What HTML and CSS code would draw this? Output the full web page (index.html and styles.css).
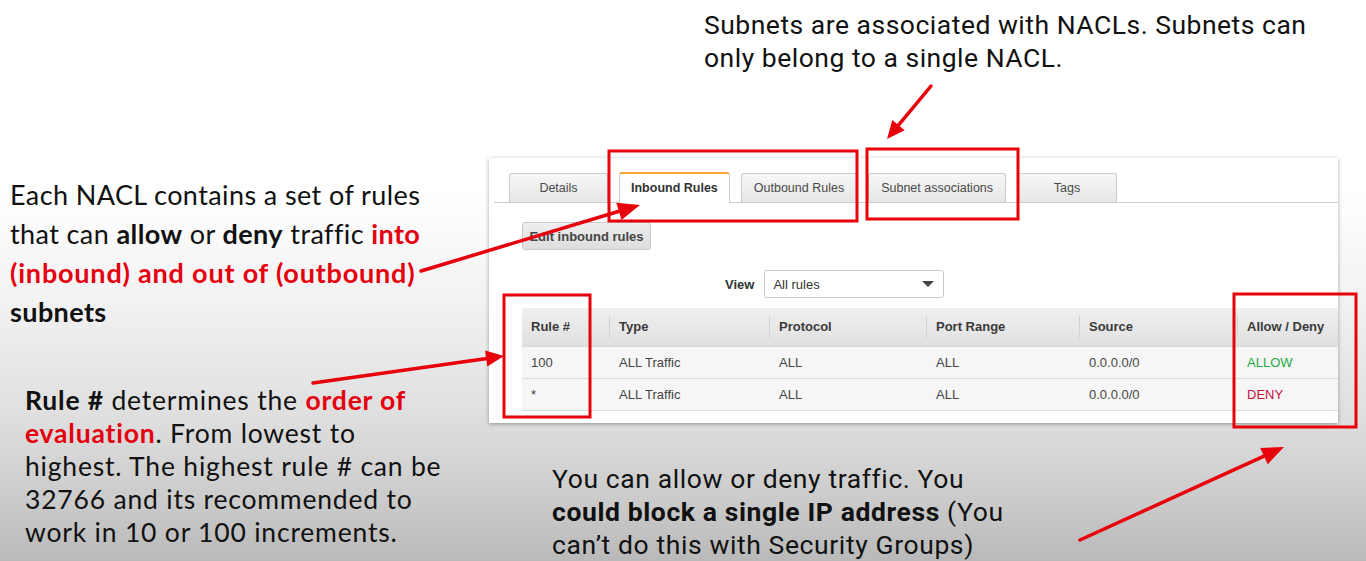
FILE: index.html
```html
<!DOCTYPE html>
<html lang="en">
<head>
<meta charset="utf-8">
<title>NACL rules</title>
<link rel="stylesheet" href="styles.css">
</head>
<body>
<div class="slide">
  <div class="panel">
    <div class="tabs">
      <div class="tab">Details</div>
      <div class="tab tab-active">Inbound Rules</div>
      <div class="tab">Outbound Rules</div>
      <div class="tab">Subnet associations</div>
      <div class="tab">Tags</div>
    </div>
    <div class="toolbar">
      <button class="btn">Edit inbound rules</button>
    </div>
    <div class="view-row">
      <span class="view-label">View</span>
      <div class="select"><span>All rules</span><span class="caret"></span></div>
    </div>
    <table class="rules">
      <colgroup>
        <col class="c1"><col class="c2"><col class="c3"><col class="c4"><col class="c5"><col class="c6">
      </colgroup>
      <thead>
        <tr>
          <th class="first">Rule #</th>
          <th>Type</th>
          <th>Protocol</th>
          <th>Port Range</th>
          <th>Source</th>
          <th>Allow / Deny</th>
        </tr>
      </thead>
      <tbody>
        <tr>
          <td class="first">100</td>
          <td>ALL Traffic</td>
          <td>ALL</td>
          <td>ALL</td>
          <td>0.0.0.0/0</td>
          <td class="allow">ALLOW</td>
        </tr>
        <tr>
          <td class="first">*</td>
          <td>ALL Traffic</td>
          <td>ALL</td>
          <td>ALL</td>
          <td>0.0.0.0/0</td>
          <td class="deny">DENY</td>
        </tr>
      </tbody>
    </table>
  </div>

  <p class="note note-top">Subnets are associated with NACLs. Subnets can<br>only belong to a single NACL.</p>
  <p class="note note-left1">Each NACL contains a set of rules<br>that can <b>allow</b> or <b>deny</b> traffic <b class="red">into</b><br><b class="red wide">(inbound) and out of (outbound)</b><br><b>subnets</b></p>
  <p class="note note-left2"><b>Rule #</b> determines the <b class="red">order of</b><br><b class="red">evaluation</b>. From lowest to<br>highest. The highest rule # can be<br>32766 and its recommended to<br>work in 10 or 100 increments.</p>
  <p class="note note-bottom">You can allow or deny traffic. You<br><b>could block a single IP address</b> (You<br>can’t do this with Security Groups)</p>

  <svg class="overlay" width="1366" height="561" viewBox="0 0 1366 561" aria-hidden="true">
    <g fill="none" stroke="#e8000b" stroke-width="3">
      <rect x="609" y="151" width="248" height="70"/>
      <rect x="867" y="149" width="151" height="70"/>
      <rect x="504" y="295" width="86" height="122"/>
      <rect x="1234" y="294" width="122" height="133"/>
    </g>
    <g stroke="#e8000b" stroke-width="3.5" stroke-linecap="round">
      <line x1="421" y1="271" x2="619" y2="211.3"/>
      <line x1="313" y1="383" x2="487" y2="358.4"/>
      <line x1="931" y1="86" x2="898.5" y2="125.2"/>
      <line x1="1080" y1="540" x2="1264" y2="456.1"/>
    </g>
    <g fill="#e8000b">
      <polygon points="640,205 621.5,220 616.3,202.7"/>
      <polygon points="504,356 487.3,366.4 485.1,350.6"/>
      <polygon points="887,139 904.7,130.3 892.3,120.1"/>
      <polygon points="1284,447 1267.7,464.3 1260.2,447.9"/>
    </g>
  </svg>
</div>
</body>
</html>
```

FILE: styles.css
```css
* { box-sizing: border-box; }

html, body {
  margin: 0;
  padding: 0;
}

body {
  width: 1366px;
  height: 561px;
  overflow: hidden;
  font-family: "Lato", "Open Sans", sans-serif;
}

.slide {
  position: relative;
  width: 1366px;
  height: 561px;
  padding: 158px 0 0 489px;
  background: linear-gradient(to bottom, #ffffff 0px, #ffffff 190px, #f2f2f2 300px, #dedede 420px, #cbcbcb 500px, #b9b9b9 561px);
}

/* ---------- AWS panel ---------- */
.panel {
  width: 849px;
  height: 265px;
  background: #ffffff;
  box-shadow: 0 1px 4px rgba(0, 0, 0, 0.35);
  font-family: "Liberation Sans", Arial, sans-serif;
  font-size: 13px;
  color: #444;
}

.tabs {
  display: flex;
  align-items: flex-end;
  gap: 11px;
  height: 45px;
  margin-left: 5px;
  padding-left: 15px;
  border-bottom: 1px solid #cfcfcf;
}

.tab {
  min-width: 100px;
  height: 29px;
  padding: 0 12px;
  display: flex;
  align-items: center;
  justify-content: center;
  border: 1px solid #cdcdcd;
  border-bottom: none;
  border-radius: 3px 3px 0 0;
  background: linear-gradient(to bottom, #f7f7f7, #e6e6e6);
  color: #4a4a4a;
  font-size: 12.5px;
  white-space: nowrap;
}

.tab:first-child {
  min-width: 99px;
}

.tab-active {
  height: 31px;
  margin-bottom: -1px;
  padding: 0 11px 1px;
  background: #ffffff;
  border-top: 2px solid #f7a534;
  font-weight: bold;
  color: #333;
}

.toolbar {
  padding: 19px 0 0 33px;
}

.btn {
  width: 129px;
  height: 28px;
  border: 1px solid #c9c9c9;
  border-radius: 3px;
  background: linear-gradient(to bottom, #eeeeee, #dedede);
  font-family: "Liberation Sans", Arial, sans-serif;
  font-size: 13px;
  font-weight: bold;
  color: #444;
  padding: 0;
}

.view-row {
  display: flex;
  align-items: center;
  gap: 10px;
  padding: 20px 0 0 236px;
}

.view-label {
  font-weight: bold;
  color: #333;
}

.select {
  width: 180px;
  height: 28px;
  display: flex;
  align-items: center;
  justify-content: space-between;
  padding: 0 9px 0 8px;
  border: 1px solid #c8c8c8;
  border-radius: 3px;
  background: #fff;
  color: #333;
}

.caret {
  width: 0;
  height: 0;
  border-left: 6px solid transparent;
  border-right: 6px solid transparent;
  border-top: 6px solid #444;
}

/* ---------- table ---------- */
.rules {
  margin: 10px 0 0 33px;
  width: 816px;
  border-collapse: collapse;
  table-layout: fixed;
}

.c1 { width: 87px; }
.c2 { width: 160px; }
.c3 { width: 157px; }
.c4 { width: 153px; }
.c5 { width: 158px; }
.c6 { width: 101px; }

.rules thead tr {
  background: linear-gradient(to bottom, #f0f0f0, #e0e0e0);
}

.rules th {
  height: 38px;
  padding: 0 0 0 10px;
  text-align: left;
  font-weight: bold;
  color: #3a3a3a;
  background: linear-gradient(#d2d2d2, #d2d2d2) no-repeat 0 50% / 1px 22px;
  border-bottom: 1px solid #d6d6d6;
}

.rules th.first {
  background: none;
  padding-left: 9px;
}

.rules td {
  height: 32px;
  padding: 0 0 0 10px;
  background: #f6f6f6;
  border-bottom: 1px solid #dcdcdc;
  color: #444;
}

.rules td.first {
  padding-left: 9px;
}

.rules td.allow { color: #1fa83c; }
.rules td.deny { color: #c8103a; }

/* ---------- slide notes ---------- */
.note {
  position: absolute;
  margin: 0;
  color: #111;
  white-space: nowrap;
}

.note b { font-weight: 700; }
.note .red { color: #e4000f; }
.note .wide { letter-spacing: 0.8px; }

.note-top {
  left: 704px;
  top: 8px;
  font-family: "Roboto", sans-serif;
  font-size: 26.5px;
  letter-spacing: 0.5px;
  line-height: 33px;
}

.note-left1 {
  left: 10px;
  top: 175px;
  font-family: "Lato", sans-serif;
  font-size: 27px;
  letter-spacing: 0.4px;
  line-height: 39px;
}

.note-left2 {
  left: 25px;
  top: 384px;
  font-family: "Lato", sans-serif;
  font-size: 26.5px;
  letter-spacing: 0.8px;
  line-height: 33px;
}

.note-bottom {
  left: 552px;
  top: 462px;
  font-family: "Roboto", sans-serif;
  font-size: 26.5px;
  letter-spacing: 0.6px;
  line-height: 33px;
}

.overlay {
  position: absolute;
  left: 0;
  top: 0;
  pointer-events: none;
}
```
